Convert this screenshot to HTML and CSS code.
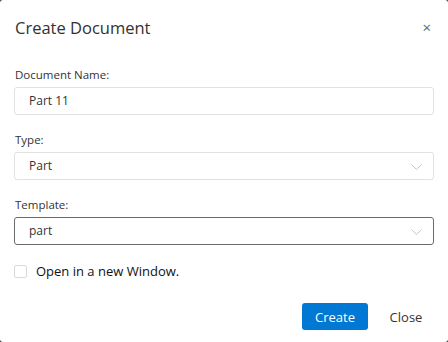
FILE: index.html
```html
<!DOCTYPE html>
<html lang="en">
<head>
    <meta charset="UTF-8">
    <title>Create Document</title>
    <link rel="stylesheet" href="styles.css">
</head>
<body>
    <div class="dialog">
        <div class="header">
            <div class="title">Create Document</div>
            <span class="close-x">&times;</span>
        </div>

        <div class="field">
            <label class="label">Document Name:</label>
            <div class="input">Part 11</div>
        </div>

        <div class="field">
            <label class="label">Type:</label>
            <div class="input select">
                <span>Part</span>
                <svg class="chevron" width="11" height="6" viewBox="0 0 11 6"><path d="M0.5 0.5 L5.5 5.5 L10.5 0.5" fill="none" stroke="#c2c6d0" stroke-width="1"/></svg>
            </div>
        </div>

        <div class="field">
            <label class="label">Template:</label>
            <div class="input select focused">
                <span>part</span>
                <svg class="chevron" width="11" height="6" viewBox="0 0 11 6"><path d="M0.5 0.5 L5.5 5.5 L10.5 0.5" fill="none" stroke="#c2c6d0" stroke-width="1"/></svg>
            </div>
        </div>

        <div class="check-row">
            <span class="checkbox"></span>
            <span class="check-text">Open in a new Window.</span>
        </div>

        <div class="footer">
            <button class="btn primary">Create</button>
            <button class="btn link">Close</button>
        </div>
    </div>
</body>
</html>
```

FILE: styles.css
```css
* {
    margin: 0;
    padding: 0;
    box-sizing: border-box;
}
body {
    background: #3a3a3a;
    font-family: "Segoe UI", "Open Sans", "Noto Sans", Arial, sans-serif;
    color: #333;
}
.dialog {
    width: 448px;
    height: 342px;
    background: white;
    border-radius: 3px;
    padding: 0 14px;
}
.header {
    height: 54px;
    display: flex;
    align-items: center;
    justify-content: space-between;
    padding-left: 1px;
}
.title {
    font-size: 16.5px;
    color: #323130;
}
.close-x {
    font-size: 15px;
    color: #666;
    margin-right: 3px;
}
.field {
    margin-top: 13px;
}
.field + .field {
    margin-top: 17px;
}
.label {
    display: block;
    font-size: 11.5px;
    line-height: 16px;
    color: #333;
    padding-left: 1px;
    margin-bottom: 4px;
}
.input {
    height: 28px;
    border: 1px solid #e1e1e1;
    border-radius: 3px;
    padding: 0 14px;
    font-size: 12px;
    line-height: 26px;
    color: #333;
    display: flex;
    align-items: center;
    justify-content: space-between;
}
.input.focused {
    border-color: #6b6b6b;
}
.chevron {
    margin-right: -3px;
    margin-top: 2px;
}
.check-row {
    display: flex;
    align-items: center;
    margin-top: 17px;
}
.checkbox {
    width: 13px;
    height: 13px;
    border: 1px solid #d9d9d9;
    border-radius: 2px;
    margin-right: 9px;
}
.check-text {
    font-size: 13px;
    color: #111;
}
.footer {
    display: flex;
    justify-content: flex-end;
    align-items: center;
    margin-top: 23px;
}
.btn {
    font-family: inherit;
    font-size: 13px;
    border: none;
    background: none;
    height: 27px;
    border-radius: 3px;
}
.btn.primary {
    background: #0078d4;
    color: white;
    width: 66px;
}
.btn.link {
    color: #333;
    width: 56px;
    margin-left: 10px;
}
```
